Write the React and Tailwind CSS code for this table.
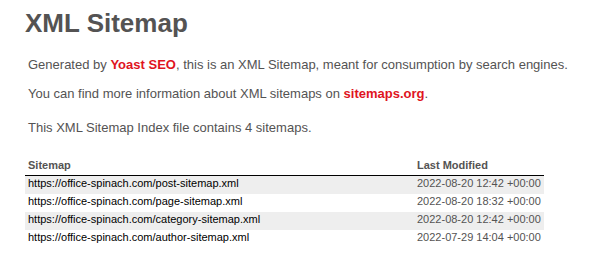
const sitemaps = [
  { loc: "https://office-spinach.com/post-sitemap.xml", lastmod: "2022-08-20 12:42 +00:00" },
  { loc: "https://office-spinach.com/page-sitemap.xml", lastmod: "2022-08-20 18:32 +00:00" },
  { loc: "https://office-spinach.com/category-sitemap.xml", lastmod: "2022-08-20 12:42 +00:00" },
  { loc: "https://office-spinach.com/author-sitemap.xml", lastmod: "2022-07-29 14:04 +00:00" },
];

function App() {
  return (
    <div
      className="min-h-[274px] bg-white pl-[25px] pr-[10px] pt-[8px] text-[13px] text-[#545353]"
      style={{ fontFamily: '"Liberation Sans", Arial, Helvetica, sans-serif' }}
    >
      {/* Intro */}
      <h1 className="text-[26px] font-bold leading-[30px]">XML Sitemap</h1>
      <p className="mx-[3px] mt-[19px] whitespace-nowrap leading-[16px]">
        Generated by{" "}
        <a href="#" className="font-bold text-[#e0141e]">
          Yoast SEO
        </a>
        , this is an XML Sitemap, meant for consumption by search engines.
      </p>
      <p className="mx-[3px] mt-[13px] leading-[16px]">
        You can find more information about XML sitemaps on{" "}
        <a href="#" className="font-bold text-[#e0141e]">
          sitemaps.org
        </a>
        .
      </p>

      {/* Content */}
      <p className="mx-[3px] mt-[18px] leading-[16px]">
        This XML Sitemap Index file contains {sitemaps.length} sitemaps.
      </p>
      <table className="mt-[20px] w-[519px] border-collapse text-[11px]">
        <thead>
          <tr>
            <th className="w-[389px] border-b border-black px-[3px] pt-[3px] pb-[4px] text-left font-bold leading-[12px]">
              Sitemap
            </th>
            <th className="border-b border-black px-[3px] pt-[3px] pb-[4px] text-left font-bold leading-[12px]">
              Last Modified
            </th>
          </tr>
        </thead>
        <tbody>
          {sitemaps.map((s, i) => (
            <tr key={s.loc} className={i % 2 === 0 ? "bg-[#eeeeee]" : ""}>
              <td className="h-[18px] px-[3px] pt-[1px] pb-[5px] leading-[12px]">
                <a href="#" className="text-black">
                  {s.loc}
                </a>
              </td>
              <td className="h-[18px] px-[3px] pt-[1px] pb-[5px] leading-[12px]">{s.lastmod}</td>
            </tr>
          ))}
        </tbody>
      </table>
    </div>
  );
}

export default App;
